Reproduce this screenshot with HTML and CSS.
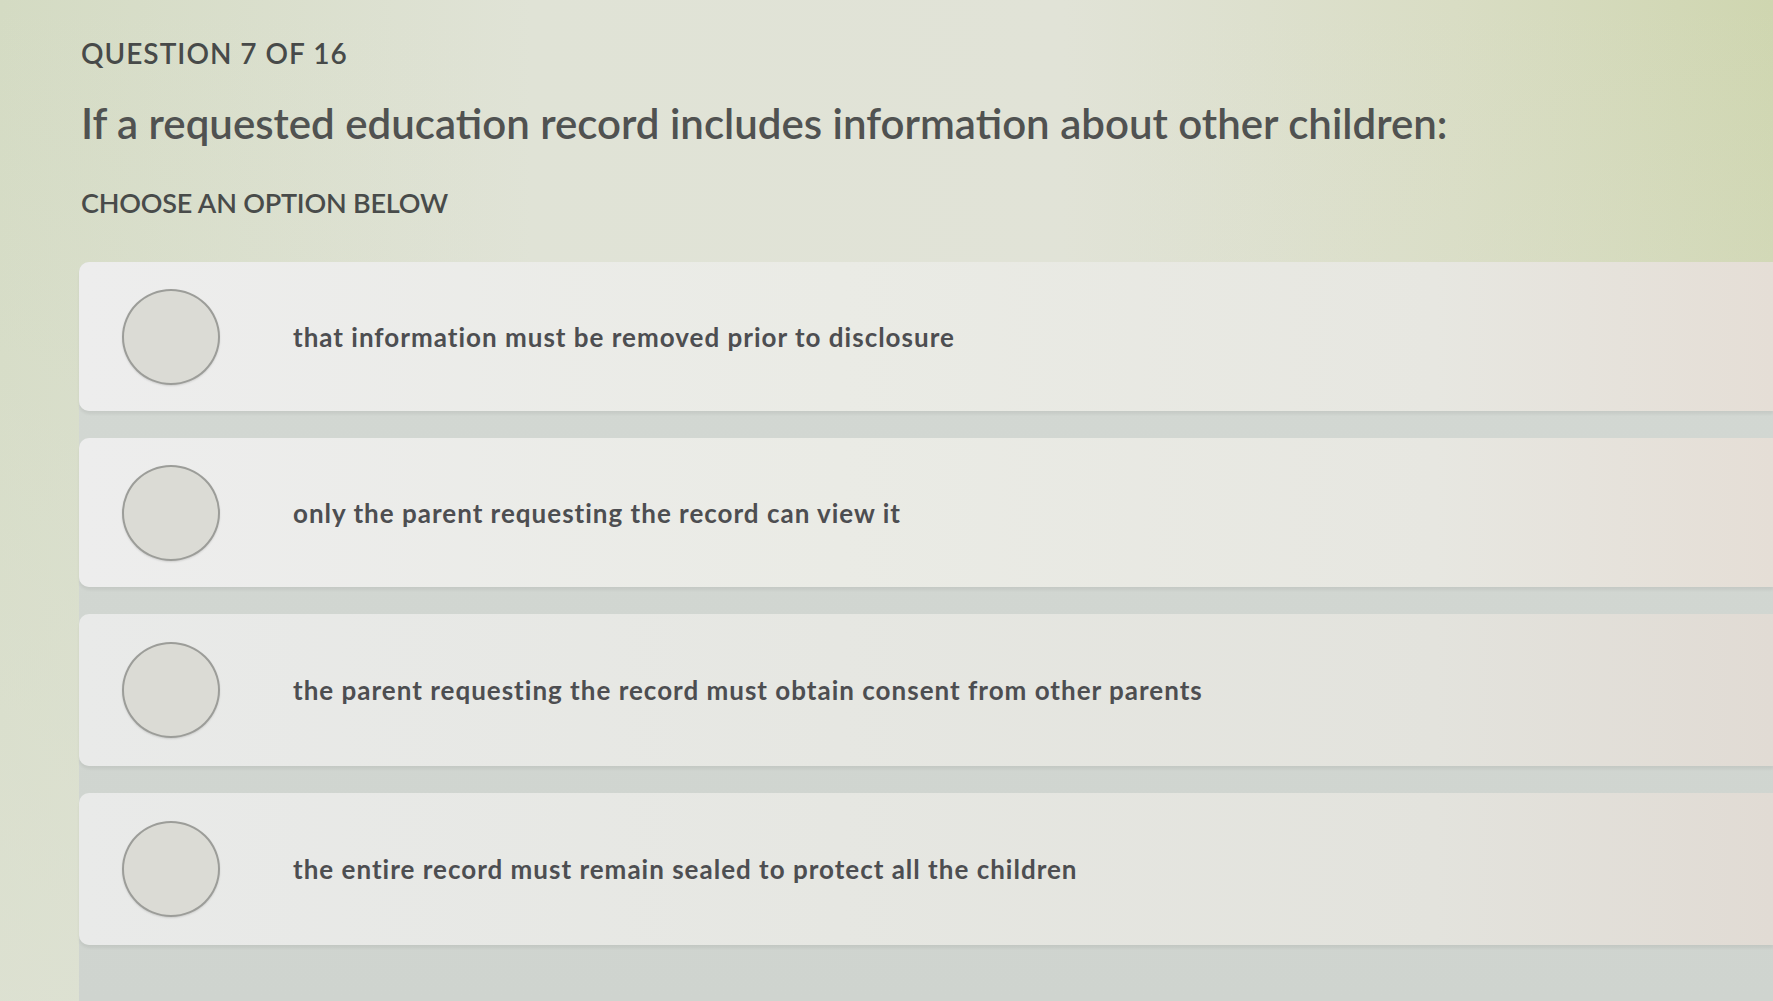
FILE: index.html
```html
<!DOCTYPE html>
<html lang="en">
<head>
<meta charset="utf-8">
<title>Question 7 of 16</title>
<link rel="stylesheet" href="styles.css">
</head>
<body>
<main class="page">
  <header class="head">
    <div class="q-count">QUESTION 7 OF 16</div>
    <h1 class="q-title">If a requested education record includes information about other children:</h1>
    <div class="q-hint">CHOOSE AN OPTION BELOW</div>
  </header>
  <ul class="options">
    <li class="option"><span class="radio"></span><span class="opt-text">that information must be removed prior to disclosure</span></li>
    <li class="option"><span class="radio"></span><span class="opt-text">only the parent requesting the record can view it</span></li>
    <li class="option"><span class="radio"></span><span class="opt-text">the parent requesting the record must obtain consent from other parents</span></li>
    <li class="option"><span class="radio"></span><span class="opt-text">the entire record must remain sealed to protect all the children</span></li>
  </ul>
</main>
</body>
</html>
```

FILE: styles.css
```css
html, body {
  margin: 0;
  padding: 0;
  height: 100%;
  overflow: hidden;
}
body {
  font-family: Lato, "Open Sans", "Liberation Sans", sans-serif;
  background:
    linear-gradient(180deg, rgba(224, 227, 214, 0) 0%, rgba(224, 227, 215, 0.7) 100%),
    linear-gradient(90deg, #d4dbc3 0%, #e0e3d6 30%, #e1e3d7 60%, #d9ddc4 82%, #cfd6b0 100%);
  color: #4e504f;
}
.page {
  display: flex;
  flex-direction: column;
  height: 100%;
}
.head {
  padding: 36px 0 0 81px;
}
.q-count {
  font-size: 28px;
  line-height: 34px;
  font-weight: 600;
  color: #474a49;
  letter-spacing: 1px;
}
.q-title {
  margin: 27px 0 0 0;
  font-size: 42px;
  line-height: 52px;
  font-weight: 600;
  color: #505251;
}
.q-hint {
  margin-top: 37px;
  font-size: 27px;
  line-height: 34px;
  font-weight: 600;
  color: #484b4a;
  letter-spacing: -0.2px;
}
.options {
  list-style: none;
  margin: 42px 0 0 79px;
  padding: 0;
  flex: 1;
  display: flex;
  flex-direction: column;
  gap: 27px;
  background: linear-gradient(180deg, #d3d8d3 0%, #cfd4cf 100%);
  border-top-left-radius: 10px;
}
.option {
  height: 149px;
  flex: none;
  display: flex;
  align-items: center;
  padding-left: 43px;
  border-radius: 10px 0 0 10px;
  background: linear-gradient(90deg, #ededed 0%, #eaebe5 45%, #e7e7e1 80%, #e5ded6 100%);
  box-shadow: 0 3px 3px rgba(0, 0, 0, 0.06);
}
.option:nth-child(3), .option:nth-child(4) {
  height: 152px;
  background: linear-gradient(90deg, #e9eae9 0%, #e6e7e2 45%, #e3e3dd 80%, #e1dbd4 100%);
}
.radio {
  width: 94px;
  height: 92px;
  flex: none;
  border-radius: 50%;
  background: #dbdbd5;
  border: 2px solid #9c9d99;
  box-shadow: 0 1px 2px rgba(0, 0, 0, 0.12);
}
.opt-text {
  margin-left: 73px;
  font-size: 26px;
  font-weight: 700;
  letter-spacing: 1px;
  color: #4d4e51;
}
```
